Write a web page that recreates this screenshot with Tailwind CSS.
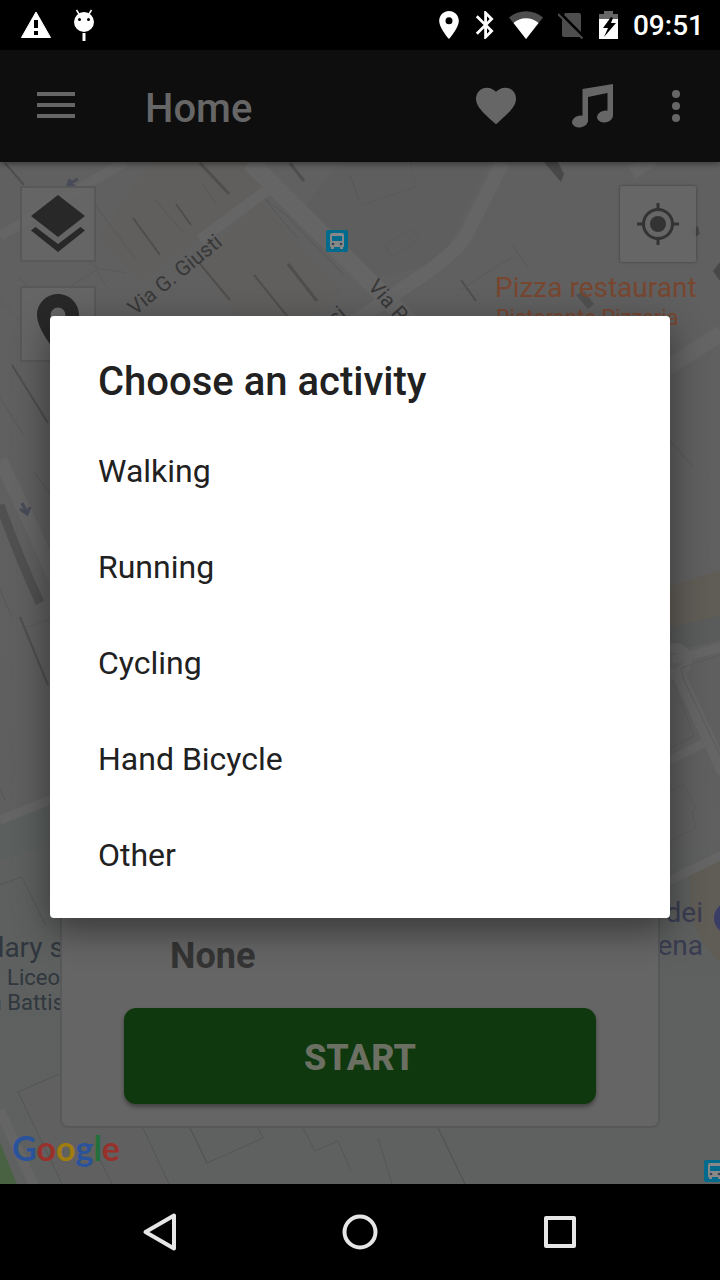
<!DOCTYPE html>
<html lang="en">
<head>
<meta charset="UTF-8" /><meta name="viewport" content="width=device-width, initial-scale=1.0"/>
<title>Home</title>
<script src="https://cdn.jsdelivr.net/npm/@tailwindcss/browser@4"></script>
</head>
<body class="relative flex min-h-screen flex-col bg-black font-[Roboto,sans-serif]">

<!-- status bar -->
<div class="flex h-[50px] items-center justify-between pl-5 pr-4 text-white">
  <div class="flex items-center gap-[22px]">
    <svg class="h-7 w-8" viewBox="0 0 32 28"><path fill="#fff" stroke="#fff" stroke-width="1" stroke-linejoin="round" d="M16 1 30.500 26.500h-29z"/><path fill="#000" d="M14 9h4v8h-4zM14 20h4v4h-4z"/></svg>
    <svg class="h-8 w-5" viewBox="0 0 20 32"><circle cx="10" cy="13" r="10" fill="#fff"/><path stroke="#fff" stroke-width="1.500" d="M5 5 2.500 1M15 5l2.500-4"/><path stroke="#fff" stroke-width="3" d="M10 24v8"/><circle cx="5.500" cy="10.500" r="1.500"/><circle cx="14.500" cy="10.500" r="1.500"/></svg>
  </div>
  <div class="flex items-center gap-[15px]">
    <svg class="h-7 w-5" viewBox="5 2 14 20" fill="#fff"><path d="M12 2C8.130 2 5 5.130 5 9c0 5.250 7 13 7 13s7-7.750 7-13c0-3.870-3.130-7-7-7zm0 9.500a2.500 2.500 0 1 1 0-5 2.500 2.500 0 0 1 0 5z"/></svg>
    <svg class="h-7 w-5" viewBox="4 2 13.710 20" fill="#fff"><path d="M17.710 7.710 12 2h-1v7.590L6.410 5 5 6.410 10.590 12 5 17.590 6.410 19 11 14.410V22h1l5.710-5.710-4.300-4.290 4.300-4.290zM13 5.830l1.880 1.880L13 9.590V5.830zm1.880 10.460L13 18.170v-3.760l1.880 1.880z"/></svg>
    <svg class="h-7 w-[34px]" viewBox="0 0 34 28"><path fill="#4d4d4d" d="M17 28 0 6.500C10-2 24-2 34 6.500z"/><path fill="#fff" d="M17 28 4.500 12C11 5.500 23 5.500 29.500 12z"/></svg>
    <svg class="h-7 w-[26px]" viewBox="1 0 26 28"><path fill="#4d4d4d" d="M8 2h14q2 0 2 2v20q0 2-2 2H7q-2 0-2-2V8z"/><path stroke="#000" stroke-width="3" d="M3 2l24 24"/><path stroke="#4d4d4d" stroke-width="2" d="M1 3l24.500 24.500"/></svg>
    <svg class="h-[30px] w-[19px]" viewBox="0 0 19 30"><path fill="#666" d="M5 1h9v3h5v5H0V4h5z"/><path fill="#fff" d="M0 9h19v20H0z"/><path fill="#000" d="M12 7 4 18h5l-4 9 12-14h-5l2-5z"/></svg>
    <span class="pt-0.5 text-[28px] font-medium leading-8">09:51</span>
  </div>
</div>

<!-- app bar -->
<header class="z-10 flex h-28 items-center bg-[#0e0e0e] pl-[37px] pr-10 text-[#666] shadow-[0_2px_6px_rgba(0,0,0,0.4)]">
  <button type="button" aria-label="Menu"><svg class="h-7 w-[38px]" viewBox="0 0 38 28" fill="currentColor"><path d="M0 0h38v4H0zM0 11h38v4H0zM0 22h38v4H0z"/></svg></button>
  <h1 class="ml-[70px] grow pt-1.5 text-[40px] font-medium leading-12">Home</h1>
  <button type="button" aria-label="Heart rate"><svg class="h-[38px] w-10" viewBox="2 3 20 18.350" fill="currentColor"><path d="m12 21.350-1.450-1.320C5.400 15.360 2 12.280 2 8.500 2 5.420 4.420 3 7.500 3c1.740 0 3.410.81 4.500 2.090C13.090 3.810 14.760 3 16.500 3 19.580 3 22 5.420 22 8.500c0 3.780-3.400 6.860-8.550 11.540L12 21.350z"/></svg></button>
  <button type="button" aria-label="Music" class="ml-14"><svg class="h-11 w-[42px]" viewBox="1 0 42 44" fill="currentColor"><path d="M11.500 5 42 0v32h-5.500V9L17 13v25h-5.500z"/><ellipse cx="9" cy="37.500" rx="8" ry="6" transform="rotate(-12 9 37.500)"/><ellipse cx="34" cy="32.500" rx="8" ry="6" transform="rotate(-12 34 32.500)"/></svg></button>
  <button type="button" aria-label="More options" class="ml-[58px]"><svg class="h-8 w-2" viewBox="0 0 8 32" fill="currentColor"><circle cx="4" cy="4" r="4"/><circle cx="4" cy="16" r="4"/><circle cx="4" cy="28" r="4"/></svg></button>
</header>

<!-- map -->
<main class="relative flex min-h-[1022px] grow flex-col justify-between overflow-hidden bg-[#5f5f5f]">
  <svg class="absolute inset-0 h-full w-full" viewBox="0 162 720 1022" preserveAspectRatio="xMidYMin slice" fill="none">
    <defs>
      <linearGradient id="land" x1="0" y1="0" x2="0" y2="1"><stop offset="0" stop-color="#606060"/><stop offset=".6" stop-color="#5f5f5f"/><stop offset=".75" stop-color="#5d605e"/><stop offset="1" stop-color="#5e6160"/></linearGradient>
      <g id="bus"><rect width="22" height="22" rx="2" fill="#006b8c"/><path fill="#888" d="M6 3h10q2 0 2 2v12h-1v2h-3v-2H8v2H5v-2H4V5q0-2 2-2z"/><path fill="#006b8c" d="M6 6h10v5H6z"/><circle cx="7" cy="14" r="1.300" fill="#345"/><circle cx="15" cy="14" r="1.300" fill="#345"/></g>
    </defs>
    <path fill="url(#land)" d="M0 162h720v1022H0z"/>
    <path fill="#615f5d" d="M150 162h100l20 25-130 95-40-45zM200 262l60-60 80 90-30 30h-70z"/>
    <path fill="#5c5c5c" d="M340 162h150l-50 100-80 20-60-70z" opacity=".4"/>
    <path fill="#605c56" d="m660 590 60-20v46l-60 14zM690 872l30-14v104q-20-15-30-50z"/>
    <path fill="#595c5a" d="m660 630 60-14v24l-50 12z"/>
    <path fill="#5b5f5d" d="m0 822 60-20v40L0 860z"/>
    <path fill="#606060" d="m18 1092 44-19 81 55 27 56H62z"/>
    <path fill="#486242" d="m0 1143 17 41H0z"/>

    <!-- roads -->
    <g stroke="#656565" stroke-linejoin="round">
      <path stroke-width="10" d="m0 236 75-45 50-29"/>
      <path stroke-width="11" d="m200 240 70-52"/>
      <path stroke-width="18" d="m250 162 118 118 60 60"/>
      <path stroke-width="14" d="m503 162-38 75q-10 18-60 50l-80 55M632 173l22-15"/>
      <path stroke-width="16" d="m660 372 62-39"/>
      <path stroke-width="14" d="M0 460q25 50 60 130"/>
      <path stroke-width="9" d="m0 820 60-24M672 660l50-13M670 760l34-17M664 883l60-29"/>
      <path stroke-width="13" d="m676 668 48 105"/>
      <circle cx="674" cy="661" r="13" stroke-width="10"/>
      <path stroke-width="10" d="m0 1110 36 80"/>
    </g>

    <!-- building walls -->
    <g stroke="#4f4e4d">
      <path stroke-width="3" d="m200 163 29 31M290 163l14 18M288 264l29 37"/>
      <path stroke-width="2" d="m133 218 27 37M176 204l15 21M200 264l30 36M5 163l19 22M461 280l15 21M20 617l28 68M254 275l33 41M12 365l36 58"/>
      <path stroke="#575757" d="m155 200 28 32M203 184l13 20M265 199l32 39M350 175l9 25M82 187l54 73M513 246l15 22M0 398l23 36M0 590l12 27M34 472l16 21M670 441l23 25M265 199l20 15 58 60M20 278l8 9"/>
      <path d="m438 1128 27 56M190 1128l17 35"/>
      <path stroke="#545654" d="m207 1163 56-25-5-10M100 1160l12 24M303 1128l12 23 23-10 13 30M18 1092l44-19M18 1092l44 92M143 1128l26 56M378 1138l14 46M0 885l22-8 24 49M0 790l5 10"/>
      <path stroke="#5a5a5a" d="m362 205 54-18-6-25M385 246l26-18 8 11-27 18zM670 792l13-8 13 24-4 3 4 16-26 14M672 680l22 56-24 12M684 680l36 75M684 680l-3-12 39-13M90 262l7 6 29 5M72 285l25-15 10 18M460 290l55-35M0 300l20 20M55 617l-32 12"/>
    </g>
    <path fill="#484848" d="m544 162 17 20 3-8-6-12zM691 230l7-4 2 8-5 3zM720 262l-7 9 7 10z"/>
    <path fill="#505050" d="m576 295 8-4 10 13-6 5z"/>
    <path stroke="#505050" stroke-width="9" d="M0 505q20 55 40 98"/>
    <g stroke="#484b58" stroke-width="3"><path d="m78 179-9 5m1-5-2 6 7 1"/><path d="m22 503 5 10m-7-4 7 5 3-7"/></g>

    <!-- places -->
    <use href="#bus" x="326" y="230"/>
    <use href="#bus" x="704" y="1160"/>
    <circle cx="730" cy="918" r="16" fill="#3a3d66"/>
    <g fill="#383838">
      <text transform="translate(135 316) rotate(-39)" font-size="21">Via G. Giusti</text>
      <text transform="translate(367 287) rotate(49)" font-size="21">Via Rossi</text>
      <text transform="translate(327 333) rotate(-39)" font-size="21">ssi</text>
    </g>
    <g fill="#78462f">
      <text x="495" y="297" font-size="28">Pizza restaurant</text>
      <text x="496" y="325" font-size="22">Ristorante Pizzeria</text>
    </g>
    <g fill="#30373e" text-anchor="end">
      <text x="64" y="957" font-size="28">dary s</text>
      <text x="60" y="985" font-size="22">Liceo</text>
      <text x="64" y="1010" font-size="22">n Battis</text>
    </g>
    <g fill="#3a3c52" font-size="28" text-anchor="end">
      <text x="703" y="922">dei</text>
      <text x="703" y="955">ena</text>
    </g>
  </svg>

  <!-- map controls -->
  <div class="relative flex items-start justify-between px-5 pt-6">
    <div class="flex flex-col gap-6">
      <button type="button" aria-label="Layers" class="flex size-[76px] items-center justify-center border-2 border-[#585858] bg-[#666]/80">
        <svg class="h-[58px] w-[54px]" viewBox="0 0 54 58" fill="#282828"><path d="m27 0 27 21-27 21L0 21zM27 49l22.500-17 4.500 3.500L27 57 0 35.500 4.500 32z"/></svg>
      </button>
      <button type="button" aria-label="Place" class="flex size-[76px] items-center justify-center border-2 border-[#585858] bg-[#666]/80">
        <svg class="h-[60px] w-[42px]" viewBox="5 2 14 20" fill="#282828"><path d="M12 2C8.130 2 5 5.130 5 9c0 5.250 7 13 7 13s7-7.750 7-13c0-3.870-3.130-7-7-7zm0 9.500a2.500 2.500 0 1 1 0-5 2.500 2.500 0 0 1 0 5z"/></svg>
      </button>
    </div>
    <button type="button" aria-label="My location" class="mr-1 flex size-[76px] items-center justify-center rounded-xs bg-[#676767]/85 shadow-[0_0_3px_rgba(0,0,0,0.4)]">
      <svg class="size-[42px]" viewBox="0 0 42 42" fill="none" stroke="#333" stroke-width="3"><circle cx="21" cy="21" r="14.500"/><circle cx="21" cy="21" r="8" fill="#333" stroke="none"/><path d="M21 0v7M21 35v7M0 21h7M35 21h7"/></svg>
    </button>
  </div>

  <!-- activity panel -->
  <section class="relative mx-[60px] mb-14 flex flex-col gap-7 rounded-lg border-2 border-[#575859] bg-[#656565] px-[62px] pb-[22px] pt-8">
    <p class="pl-[46px] text-[36px] font-bold leading-12 text-[#343434]">None</p>
    <button type="button" class="h-24 rounded-xl bg-[#0f380f] pt-1 text-[36px] font-extrabold text-[#6b7063] shadow-[0_3px_4px_rgba(0,0,0,0.35)]">START</button>
  </section>

  <a href="#" aria-label="Google" class="absolute bottom-3 left-3 font-[Lato,sans-serif] text-[34px] font-bold leading-12"><span class="text-[#2a539b]">G</span><span class="text-[#98312b]">o</span><span class="text-[#a07d0e]">o</span><span class="text-[#2a539b]">g</span><span class="text-[#24703a]">l</span><span class="text-[#98312b]">e</span></a>
</main>

<!-- navigation bar -->
<nav class="flex h-24 items-center justify-center">
  <button type="button" aria-label="Back" class="flex w-[200px] justify-center"><svg class="size-10" viewBox="0 0 40 40" fill="none" stroke="#e6e6e6" stroke-width="4" stroke-linejoin="round"><path d="M34 3.500v33L5.500 20z"/></svg></button>
  <button type="button" aria-label="Home screen" class="flex w-[200px] justify-center"><svg class="size-10" viewBox="0 0 40 40" fill="none" stroke="#e6e6e6" stroke-width="4"><circle cx="20" cy="20" r="15.500"/></svg></button>
  <button type="button" aria-label="Recent apps" class="flex w-[200px] justify-center"><svg class="size-10" viewBox="0 0 40 40" fill="none" stroke="#e6e6e6" stroke-width="4" stroke-linejoin="round"><path d="M6 6h28v28H6z"/></svg></button>
</nav>

<!-- dialog -->
<div class="absolute inset-x-0 bottom-24 top-[50px] z-20 flex items-center px-[50px]">
  <div role="dialog" aria-labelledby="dialogTitle" class="w-full rounded-sm bg-white pb-[15px] pt-[42px] text-[#212121] shadow-[0_12px_36px_rgba(0,0,0,0.45)]">
    <h2 id="dialogTitle" class="mb-[17px] px-12 text-[40px] font-medium leading-12">Choose an activity</h2>
    <ul>
      <li><button type="button" class="h-24 w-full px-12 text-left text-[32px]">Walking</button></li>
      <li><button type="button" class="h-24 w-full px-12 text-left text-[32px]">Running</button></li>
      <li><button type="button" class="h-24 w-full px-12 text-left text-[32px]">Cycling</button></li>
      <li><button type="button" class="h-24 w-full px-12 text-left text-[32px]">Hand Bicycle</button></li>
      <li><button type="button" class="h-24 w-full px-12 text-left text-[32px]">Other</button></li>
    </ul>
  </div>
</div>

</body></html>
